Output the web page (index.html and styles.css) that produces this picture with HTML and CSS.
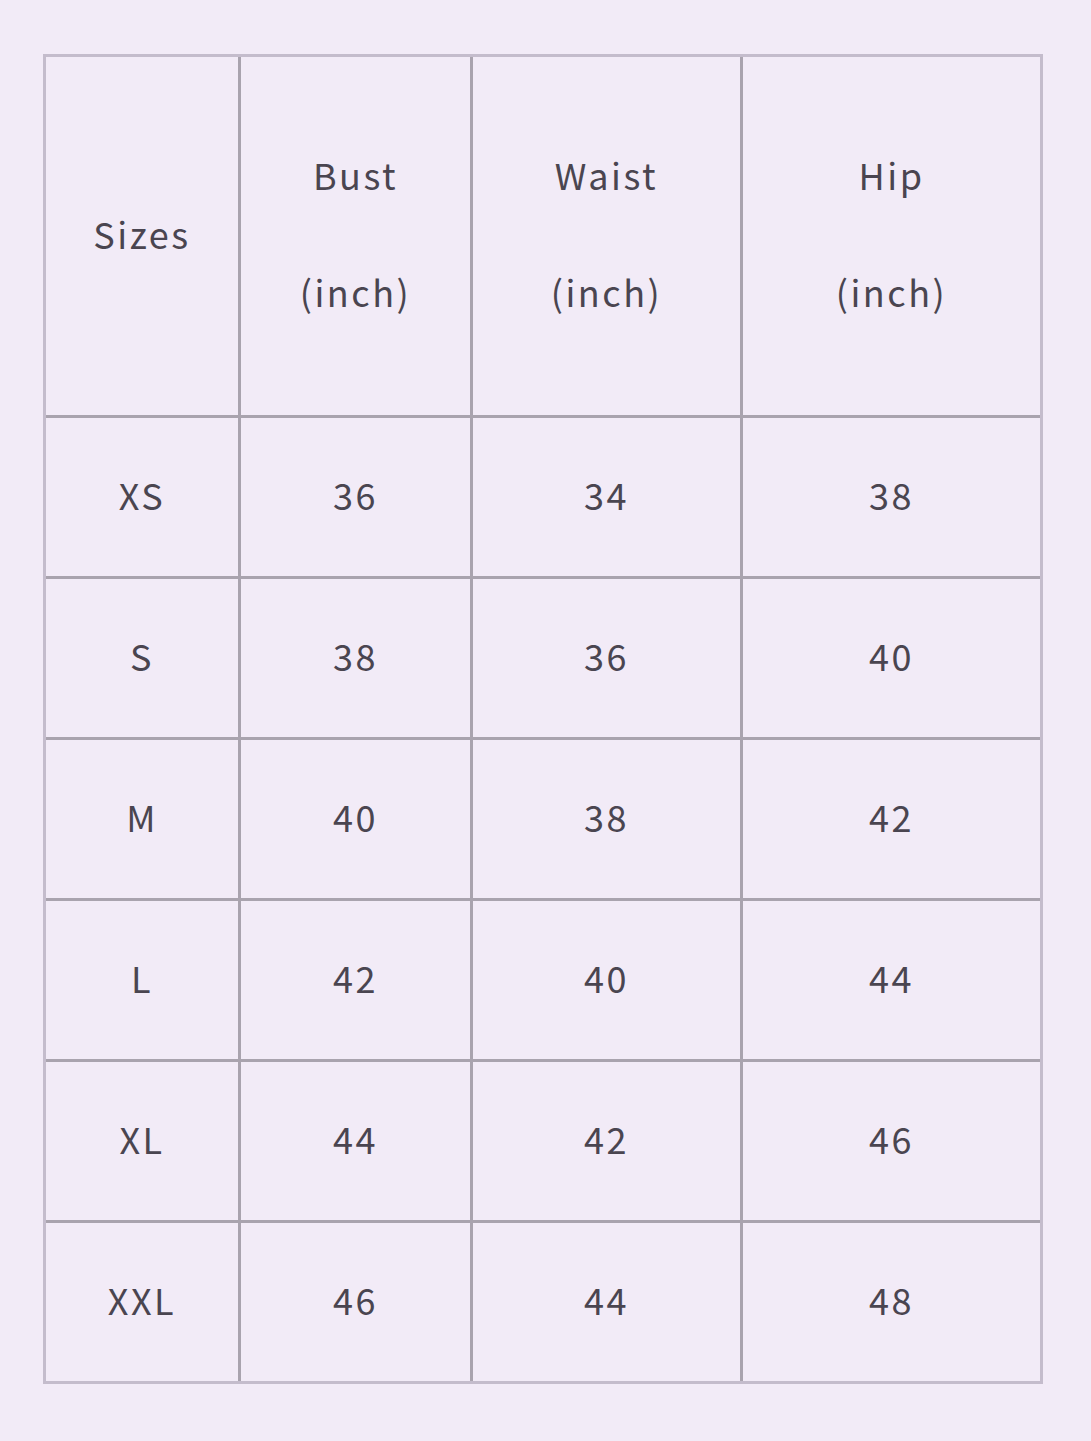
FILE: index.html
```html
<!DOCTYPE html>
<html>
<head>
<meta charset="utf-8">
<link rel="stylesheet" href="styles.css">
</head>
<body>
<table class="size-table">
  <colgroup>
    <col class="c1"><col class="c2"><col class="c3"><col class="c4">
  </colgroup>
  <thead>
    <tr class="head">
      <th>Sizes</th>
      <th>Bust<br>(inch)</th>
      <th>Waist<br>(inch)</th>
      <th>Hip<br>(inch)</th>
    </tr>
  </thead>
  <tbody>
    <tr><td>XS</td><td>36</td><td>34</td><td>38</td></tr>
    <tr><td>S</td><td>38</td><td>36</td><td>40</td></tr>
    <tr><td>M</td><td>40</td><td>38</td><td>42</td></tr>
    <tr><td>L</td><td>42</td><td>40</td><td>44</td></tr>
    <tr><td>XL</td><td>44</td><td>42</td><td>46</td></tr>
    <tr><td>XXL</td><td>46</td><td>44</td><td>48</td></tr>
  </tbody>
</table>
</body>
</html>
```
FILE: styles.css
```css
html, body {
  margin: 0;
  background: #f2ebf7;
}
body {
  padding: 54px 0 0 43px;
  font-family: "Noto Sans CJK SC", "Noto Sans", sans-serif;
  color: #4a4550;
}
.size-table {
  width: 1000px;
  border-collapse: separate;
  border-spacing: 0;
  border: 3px solid #c4bccc;
  table-layout: fixed;
}
.c1 { width: 195px; }
.c2 { width: 232px; }
.c3 { width: 270px; }
.c4 { width: 297px; }
.size-table th,
.size-table td {
  padding: 0 0 6px 0;
  font-weight: 400;
  font-size: 36px;
  letter-spacing: 2.5px;
  text-align: center;
  vertical-align: middle;
  border-right: 3px solid #a9a3ae;
  border-bottom: 3px solid #a9a3ae;
  box-sizing: border-box;
}
.size-table th:last-child,
.size-table td:last-child {
  border-right: 0;
}
.size-table tbody tr:last-child td {
  border-bottom: 0;
}
.head th {
  height: 361px;
  line-height: 117px;
}
.size-table tbody td {
  height: 161px;
  line-height: 40px;
}
.size-table tbody tr:last-child td {
  height: 158px;
}
```
